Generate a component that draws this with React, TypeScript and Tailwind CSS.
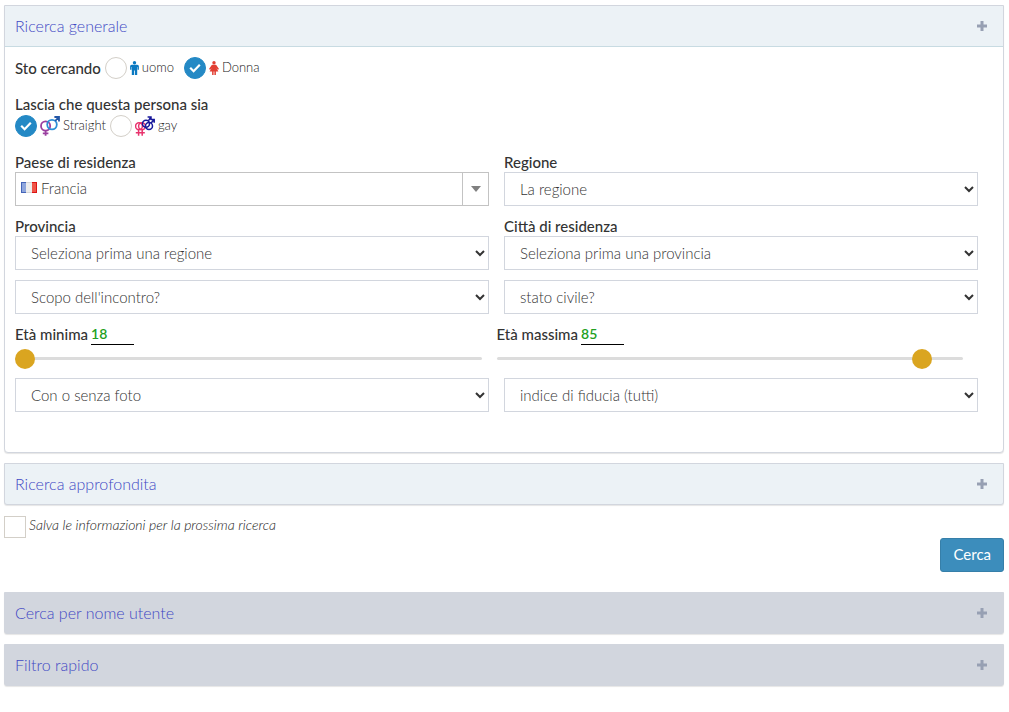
import { useState, type ReactNode } from "react";

const selectClass =
  "block h-[34px] w-full border border-[#d2d6de] bg-white px-[11px] pb-px font-['Lato'] text-[15px] font-light text-[#333]";
const labelClass = "block h-5 text-[15px] leading-5 font-medium text-[#333]";

function Plus() {
  return (
    <svg viewBox="0 0 10 10" className="h-[10px] w-[10px]" aria-hidden="true">
      <path d="M3.5 0h3v3.5h3.5v3h-3.5v3.5h-3v-3.5h-3.5v-3h3.5z" fill="#97a0b3" />
    </svg>
  );
}

function Man() {
  return (
    <svg viewBox="0 0 9 14" className="h-[14px] w-[9px]" aria-hidden="true">
      <circle cx="4.5" cy="1.8" r="1.7" fill="#0b79c1" />
      <path
        d="M1.8 3.8h5.4c1 0 1.7.7 1.7 1.7v3.3H7.6V6h-.4v8H4.9V9.4h-.8V14H1.8V6h-.4v2.8H.1V5.5c0-1 .7-1.7 1.7-1.7z"
        fill="#0b79c1"
      />
    </svg>
  );
}

function Woman() {
  return (
    <svg viewBox="0 0 10 14" className="h-[14px] w-[10px]" aria-hidden="true">
      <circle cx="5" cy="1.8" r="1.7" fill="#e23f33" />
      <path
        d="M3.4 3.8h3.2c.5 0 .8.2 1 .6L10 8l-1.1.8-1.5-1.9L9.4 10.6H6.9V14H5.4v-3.4h-.8V14H3.1v-3.4H.6L2.6 6.9 1.1 8.8 0 8l2.4-3.6c.2-.4.5-.6 1-.6z"
        fill="#e23f33"
      />
    </svg>
  );
}

function StraightIcon() {
  return (
    <svg viewBox="0 0 20 20" className="h-5 w-5" fill="none" strokeWidth="1.8" aria-hidden="true">
      <circle cx="5.6" cy="10" r="4.6" stroke="#9b3fa0" />
      <path d="M5.6 14.4v5.4M2.8 17.4h5.6" stroke="#9b3fa0" />
      <circle cx="12" cy="8.6" r="4.8" stroke="#2b8fd8" />
      <path d="M15.2 5l3.6-4M14.4 1h4.6v4.6" stroke="#2457a6" />
    </svg>
  );
}

function GayIcon() {
  return (
    <svg viewBox="0 0 20 20" className="h-5 w-5" fill="none" strokeWidth="1.5" aria-hidden="true">
      <circle cx="4" cy="10.2" r="3.4" stroke="#e8336d" />
      <circle cx="7" cy="10.2" r="3.4" stroke="#e8336d" />
      <path d="M3.6 13.4v6.4M7.2 13.4v6.4M0.8 16.8h9" stroke="#e8336d" />
      <circle cx="11" cy="7.8" r="3.5" stroke="#17179a" />
      <circle cx="14" cy="10" r="3.5" stroke="#17179a" />
      <path d="M13.4 4.8l2.4-3.6M12.6 1h3.4v3M16.2 7l2.8-3.4M15.8 3.6h3.4v3.2" stroke="#17179a" />
    </svg>
  );
}

function Choice(props: { name: string; checked?: boolean; icon: ReactNode; text: string }) {
  return (
    <label className="flex items-center gap-[3px]">
      <span className="relative grid h-[22px] w-[22px] place-items-center">
        <input
          type="radio"
          name={props.name}
          defaultChecked={props.checked}
          className="peer h-[22px] w-[22px] appearance-none rounded-full border border-[#d3cfc8] bg-white checked:border-[#2489c5] checked:bg-[#2489c5]"
        />
        <svg
          viewBox="0 0 12 10"
          className="pointer-events-none absolute hidden h-[10px] w-3 peer-checked:block"
          aria-hidden="true"
        >
          <path d="M1.2 4.8l3.4 3.4 6.2-6.4" fill="none" stroke="#fff" strokeWidth="2.2" />
        </svg>
      </span>
      {props.icon}
      <span className="pb-[2px] text-[13px] leading-5 font-light text-[#222]">{props.text}</span>
    </label>
  );
}

function Field(props: { id: string; label: string; option: string }) {
  return (
    <div>
      <label htmlFor={props.id} className={labelClass}>
        {props.label}
      </label>
      <select id={props.id} className={selectClass}>
        <option>{props.option}</option>
      </select>
    </div>
  );
}

function AgeSlider(props: { id: string; label: string; initial: number }) {
  const [age, setAge] = useState(props.initial);
  return (
    <div>
      <div className="flex h-[21px] gap-[3px]">
        <label htmlFor={props.id} className={labelClass}>
          {props.label}
        </label>
        <output
          htmlFor={props.id}
          className="block w-[43px] border-b border-black text-[14px] leading-5 font-semibold text-[#22a022]"
        >
          {age}
        </output>
      </div>
      <input
        id={props.id}
        type="range"
        min={18}
        max={90}
        value={age}
        onChange={(e) => setAge(Number(e.target.value))}
        className="mt-[3px] block h-5 w-full appearance-none bg-transparent [&::-webkit-slider-runnable-track]:h-[3px] [&::-webkit-slider-runnable-track]:rounded-full [&::-webkit-slider-runnable-track]:bg-[#dcdcdc] [&::-webkit-slider-thumb]:-mt-2 [&::-webkit-slider-thumb]:h-5 [&::-webkit-slider-thumb]:w-5 [&::-webkit-slider-thumb]:appearance-none [&::-webkit-slider-thumb]:rounded-full [&::-webkit-slider-thumb]:bg-[#daa520]"
      />
    </div>
  );
}

function BarButton(props: { title: string }) {
  return (
    <h2>
      <button
        type="button"
        className="flex h-10 w-full items-center justify-between pr-4 pb-px pl-[10px] text-left text-[16px] font-light text-[#4148c4]"
      >
        <span>{props.title}</span>
        <Plus />
      </button>
    </h2>
  );
}

export default function App() {
  return (
    <main className="bg-white pt-[5px] pr-[5px] pb-6 pl-1 font-['Lato',sans-serif] text-[#333]">
      <form onSubmit={(e) => e.preventDefault()}>
        <section className="rounded-b-[4px] border border-[#d2d6de] bg-white shadow-[0_1px_1px_rgba(0,0,0,0.1)]">
          <div className="border-b border-[#c8dbe2] bg-[#ecf2f6]">
            <BarButton title="Ricerca generale" />
          </div>
          <div className="pt-[10px] pr-[25px] pb-10 pl-[10px]">
            <fieldset className="flex items-center gap-1">
              <legend className="float-left text-[15px] leading-[22px] font-medium">Sto cercando</legend>
              <div className="flex gap-[10px]">
                <Choice name="gender" icon={<Man />} text="uomo" />
                <Choice name="gender" icon={<Woman />} text="Donna" checked />
              </div>
            </fieldset>
            <fieldset className="mt-[15px]">
              <legend className={labelClass}>Lascia che questa persona sia</legend>
              <div className="mt-px flex gap-1">
                <Choice name="orientation" icon={<StraightIcon />} text="Straight" checked />
                <Choice name="orientation" icon={<GayIcon />} text="gay" />
              </div>
            </fieldset>
            <div className="mt-[15px] grid grid-cols-2 gap-x-[15px] gap-y-[10px]">
              <div>
                <label htmlFor="country" className={labelClass}>
                  Paese di residenza
                </label>
                <div className="relative">
                  <select
                    id="country"
                    className="block h-[34px] w-full appearance-none border border-[#c3c3c3] bg-white pr-8 pb-[2px] pl-[25px] text-[15px] font-light text-[#333]"
                  >
                    <option>Francia</option>
                  </select>
                  <svg
                    viewBox="0 0 16 11"
                    className="pointer-events-none absolute top-[10px] left-[6px] h-[11px] w-4"
                    aria-hidden="true"
                  >
                    <path d="M0 0h5v11H0z" fill="#4464b8" />
                    <path d="M1 1h4v9H1z" fill="#8fa6dc" />
                    <path d="M5 0h6v11H5z" fill="#d6d6d6" />
                    <path d="M5 1h6v9H5z" fill="#ededed" />
                    <path d="M11 0h5v11h-5z" fill="#dc1414" />
                    <path d="M11 1h4v9h-4z" fill="#ef5548" />
                  </svg>
                  <span className="pointer-events-none absolute inset-y-0 right-0 grid w-[27px] place-items-center border-l border-[#c3c3c3]">
                    <svg viewBox="0 0 10 6" className="h-[6px] w-[10px]" aria-hidden="true">
                      <path d="M0 0h10L5 6z" fill="#808080" />
                    </svg>
                  </span>
                </div>
              </div>
              <Field id="region" label="Regione" option="La regione" />
              <Field id="province" label="Provincia" option="Seleziona prima una regione" />
              <Field id="city" label="Città di residenza" option="Seleziona prima una provincia" />
              <select aria-label="Scopo dell'incontro" className={selectClass}>
                <option>Scopo dell'incontro?</option>
              </select>
              <select aria-label="Stato civile" className={selectClass}>
                <option>stato civile?</option>
              </select>
            </div>
            <div className="mt-[10px] mr-[15px] grid grid-cols-2 gap-x-[15px]">
              <AgeSlider id="age-min" label="Età minima" initial={18} />
              <AgeSlider id="age-max" label="Età massima" initial={85} />
            </div>
            <div className="mt-[10px] grid grid-cols-2 gap-x-[15px]">
              <select aria-label="Foto" className={selectClass}>
                <option>Con o senza foto</option>
              </select>
              <select aria-label="Indice di fiducia" className={selectClass}>
                <option>indice di fiducia (tutti)</option>
              </select>
            </div>
          </div>
        </section>
        <section className="mt-[10px] rounded-b-[3px] border border-[#d2d6de] bg-[#ecf2f6] shadow-[0_1px_1px_rgba(0,0,0,0.1)]">
          <BarButton title="Ricerca approfondita" />
        </section>
        <label className="mt-[11px] flex h-[22px] w-fit gap-[3px]">
          <input
            type="checkbox"
            className="h-[22px] w-[22px] appearance-none border border-[#d3cfc8] bg-white checked:bg-[#2489c5]"
          />
          <span className="text-[14px] leading-[18px] font-light text-[#222] italic">
            Salva le informazioni per la prossima ricerca
          </span>
        </label>
        <div className="flex justify-end">
          <button
            type="submit"
            className="h-[34px] rounded-[3px] border border-[#367fa9] bg-[#3c8dbc] px-3 pb-px text-[15px] text-white"
          >
            Cerca
          </button>
        </div>
      </form>
      <section className="mt-5 rounded-b-[3px] border border-[#d2d6de] bg-[#d2d6de] shadow-[0_1px_1px_rgba(0,0,0,0.1)]">
        <BarButton title="Cerca per nome utente" />
      </section>
      <section className="mt-[10px] rounded-b-[3px] border border-[#d2d6de] bg-[#d2d6de] shadow-[0_1px_1px_rgba(0,0,0,0.1)]">
        <BarButton title="Filtro rapido" />
      </section>
    </main>
  );
}
